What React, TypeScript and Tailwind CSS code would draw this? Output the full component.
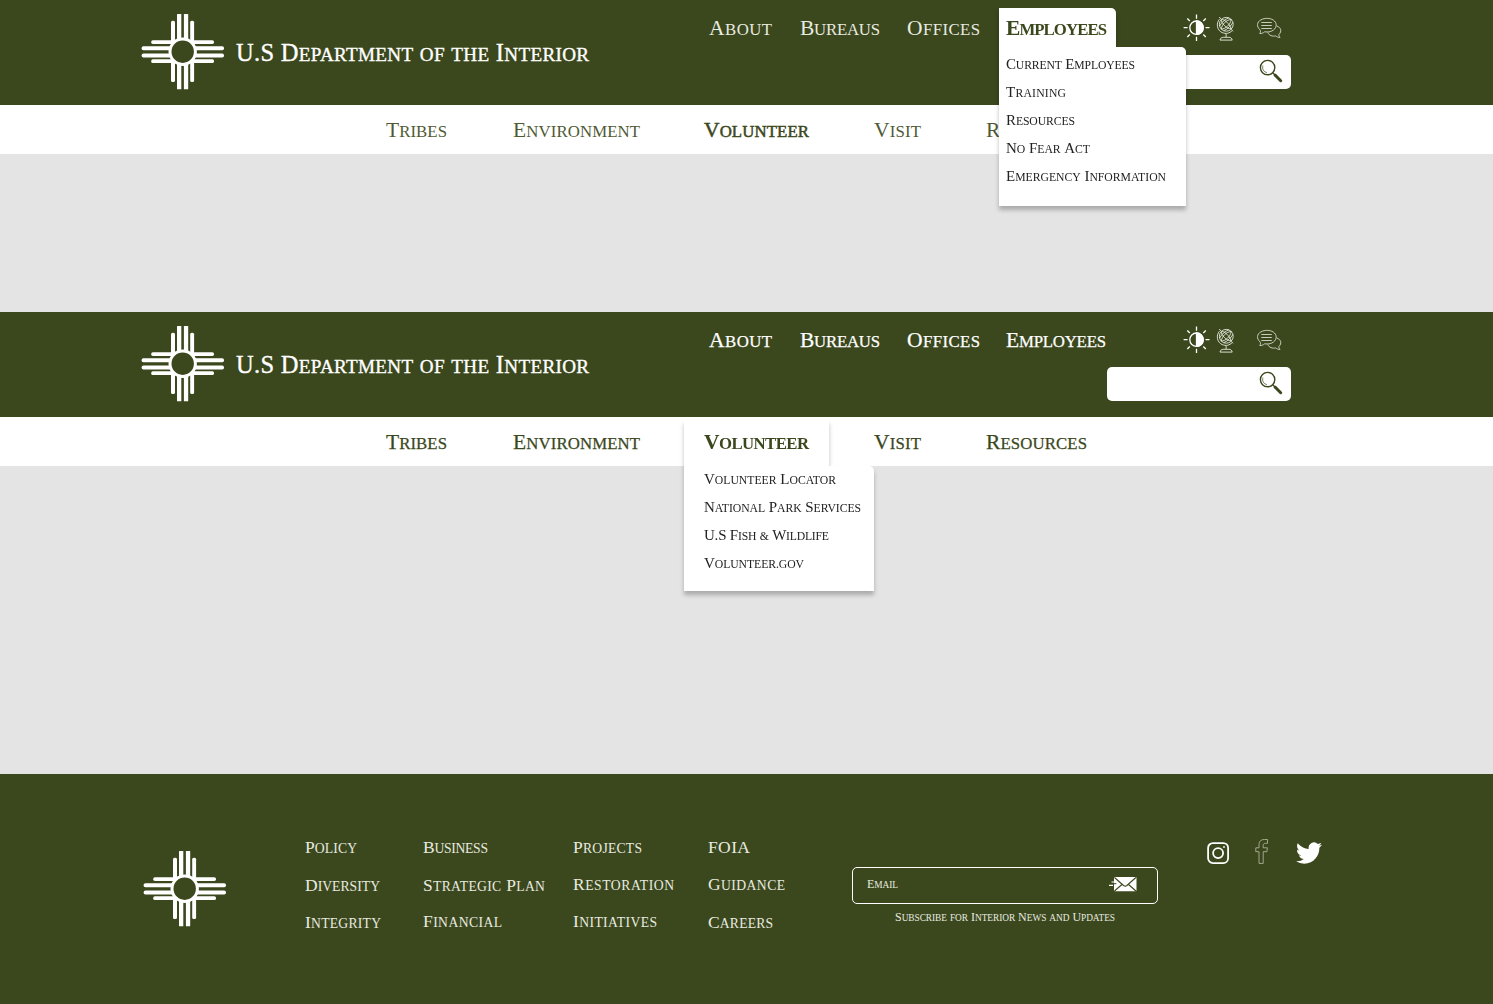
import { useLayoutEffect, useRef, useState } from "react";
import clsx from "clsx";

type LabelProps = { text: string; width: number; className?: string };

// A line of small caps, letter-spaced so that it fills the given width.
function Label({ text, width, className }: LabelProps) {
  const ref = useRef<HTMLSpanElement>(null);
  const [spacing, setSpacing] = useState(0);
  useLayoutEffect(() => {
    if (!ref.current) return;
    const natural = ref.current.getBoundingClientRect().width;
    setSpacing((width - natural) / (text.length - 1));
  }, [text, width]);
  return (
    <span className={clsx("block h-6 shrink-0 whitespace-pre leading-6", className)} style={{ width }}>
      <span ref={ref} className="inline-block" style={{ letterSpacing: `${spacing}px` }}>
        {text.split(/( )/).map((word, i) => {
          if (word === " " || (word === word.toUpperCase() && word !== "&")) return word;
          const capital = word[0] !== word[0].toLowerCase();
          return (
            <span
              key={i}
              className={clsx(
                "inline-block text-[0.78em] uppercase leading-none",
                capital && "first-letter:text-[1.282em]",
              )}
            >
              {word}
            </span>
          );
        })}
      </span>
    </span>
  );
}

function Zia({ className }: { className?: string }) {
  return (
    <svg viewBox="141 14 83 76" className={clsx("h-[76px] w-[83px] shrink-0", className)} fill="#fff">
      <rect x="171" y="20.7" width="4" height="61.3" rx="1.5" />
      <rect x="177" y="14" width="4.3" height="75.3" rx=".5" />
      <rect x="183.9" y="14" width="4.3" height="75.3" rx=".5" />
      <rect x="190.2" y="20.7" width="3.9" height="61.3" rx="1.5" />
      <rect x="151.2" y="40.2" width="62.8" height="3.8" rx="1.7" />
      <rect x="141.6" y="46.2" width="82.4" height="4" rx="1.8" />
      <rect x="141.6" y="53.6" width="82.4" height="4" rx="1.8" />
      <rect x="151.2" y="59.3" width="62.8" height="3.8" rx="1.7" />
      <circle cx="182.7" cy="51.7" r="12.7" fill="#3b471c" stroke="#fff" strokeWidth="3" />
    </svg>
  );
}

function Sun() {
  return (
    <svg viewBox="0 0 27 27" className="h-[27px] w-[27px] shrink-0" fill="none" stroke="#fff" strokeWidth="1.3">
      <circle cx="13.5" cy="13.7" r="6.7" />
      <path d="M13.5 7a6.7 6.7 0 0 1 0 13.4z" fill="#fff" />
      <path d="M13.5 .5v4.2M13.5 22.7v4.2M.6 13.7h4M22.5 13.7h4M4.3 4.5l2.5 2.5M20.3 20.5l2.5 2.5M4.3 23l2.5-2.5M20.3 7l2.5-2.5" />
    </svg>
  );
}

function Globe() {
  return (
    <svg viewBox="0 -0.3 20 25" className="h-[25px] w-5 shrink-0" fill="none" stroke="#e8ebe0" strokeWidth=".9">
      <circle cx="10.3" cy="8" r="6.9" />
      <path d="M3.2.7l2 2.2M15.3 13l1.7 2" />
      <path d="M3.5 2.8C-.4 7.5 1.3 14 6 16.2c4 1.8 7.6.7 10.2-1.8" />
      <path d="M5.5 3.2c3.2-.3 7.8 4.2 9.8 9.4M5.5 3.2c-.6 3.4 4.6 9 9.8 9.4M5.2 12.8C6 8 10 3.7 15.2 3.1M3.6 9.7C6 5.5 9 3 12.8 1.5M7.7 14.4c3.7-1.4 7.5-5 9.2-8.2M5.2 12.8c4.3-.2 9.2-4.3 10-9.7" />
      <path d="M10.1 17.2v3.7M4 23.8c.4-2 1.6-2.8 3.2-2.8h5.6c2 0 3 .8 3.4 2.8z" />
    </svg>
  );
}

function Chat() {
  return (
    <svg viewBox="0 -0.5 25 23" className="h-[23px] w-[25px] shrink-0" fill="none" stroke="#d5dacb" strokeWidth=".9" strokeLinejoin="round">
      <path d="M3.3 12.7C-.8 9-.2 4.5 4 2.3c3.7-2 8.9-1.9 12.2.2 3.9 2.4 4 7.3.2 10.1-2.6 1.8-5.6 2.2-8.7 1.7-1.6 1.3-3 1.8-4.9 1.7.7-1.2.9-2 .5-3.3z" />
      <path d="M4.3 5h10.5M4.3 8h10.5M4.3 11h10.5" />
      <path d="M19.7 8.5c4.5 1.3 5.3 5.7 2.3 8.3-.3 1.2.1 2.2 1 3.1-1.7.2-3-.4-4.2-1.5-3.3.7-6.8-.3-8-3.5" />
    </svg>
  );
}

function Magnifier() {
  return (
    <svg viewBox="0 0 24 24" className="h-6 w-6 shrink-0" fill="none" stroke="#3b471c">
      <circle cx="8.6" cy="8.6" r="7.2" strokeWidth="1.4" />
      <path d="M3.9 6.5c-1 3.5.8 6.6 4 7" strokeWidth=".7" />
      <path d="M13.6 13.6l3 3" strokeWidth="1.3" />
      <path d="M16 16l5.7 5.7" strokeWidth="3" strokeLinecap="round" />
    </svg>
  );
}

function Mail() {
  return (
    <svg viewBox="0 0 29 16" className="h-4 w-[29px] shrink-0">
      <rect x="6" y=".9" width="22.5" height="14.4" rx="1" fill="#fff" />
      <path d="M6.5 1.5l9 8q1.7 1.3 3.4 0l9-8M6.5 15l8-7M27.9 15L20 8" fill="none" stroke="#3b471c" strokeWidth="1.1" />
      <path d="M3.5 6h4M1 9.3h4M6 11.5h2" stroke="#fff" strokeWidth="1.2" />
      <path d="M5.3 7.7h3" stroke="#3b471c" strokeWidth="1" />
    </svg>
  );
}

function Instagram() {
  return (
    <svg viewBox="0 0 22 22" className="h-[22px] w-[22px] shrink-0" fill="none" stroke="#fff" strokeWidth="1.8">
      <rect x="1.1" y="1.1" width="20" height="20" rx="4.8" />
      <circle cx="11.1" cy="11.1" r="5" />
      <circle cx="17" cy="5" r=".9" fill="#fff" stroke="none" />
    </svg>
  );
}

function Facebook() {
  return (
    <svg viewBox="0 0 13 25" className="h-[25px] w-[13px] shrink-0" fill="none" stroke="#b9c0aa" strokeWidth=".8">
      <path d="M4 24.4V12.7H.8V8.8H4V5.6C4 2 6.2.5 9.4.5h3.1v3.8h-2.1c-1.5 0-2.2.7-2.2 2.2v2.3h4.2l-.5 3.900H8.200v11.700z" />
    </svg>
  );
}

function Twitter() {
  return (
    <svg viewBox="0 2 24 20" className="h-[22px] w-[26px] shrink-0" fill="#fff" preserveAspectRatio="none">
      <path d="M23.953 4.57a10 10 0 0 1-2.825.775 4.958 4.958 0 0 0 2.163-2.723c-.951.555-2.005.959-3.127 1.184a4.92 4.92 0 0 0-8.384 4.482C7.69 8.095 4.067 6.13 1.64 3.162a4.822 4.822 0 0 0-.666 2.475c0 1.71.87 3.213 2.188 4.096a4.904 4.904 0 0 1-2.228-.616v.06a4.923 4.923 0 0 0 3.946 4.827 4.996 4.996 0 0 1-2.212.085 4.936 4.936 0 0 0 4.604 3.417 9.867 9.867 0 0 1-6.102 2.105c-.39 0-.779-.023-1.17-.067a13.995 13.995 0 0 0 7.557 2.209c9.053 0 13.998-7.496 13.998-13.985 0-.21 0-.42-.015-.63A9.935 9.935 0 0 0 24 4.59z" />
    </svg>
  );
}

const employeeLinks = [
  { text: "Current Employees", width: 129 },
  { text: "Training", width: 60 },
  { text: "Resources", width: 69 },
  { text: "No Fear Act", width: 84 },
  { text: "Emergency Information", width: 160 },
];

const volunteerLinks = [
  { text: "Volunteer Locator", width: 132 },
  { text: "National Park Services", width: 157 },
  { text: "U.S Fish & Wildlife", width: 125 },
  { text: "Volunteer.gov", width: 100 },
];

function EmployeesMenu() {
  return (
    <div className="absolute left-[999px] top-2 z-10 drop-shadow-[0_4px_2px_rgba(0,0,0,0.25)]">
      <div className="h-[39px] w-[117px] rounded-tr-[5px] bg-white pl-[7px] pt-2">
        <Label text="Employees" width={101} className="text-[21.5px] font-bold text-[#3b471c]" />
      </div>
      <div className="flex h-[159px] w-[187px] flex-col gap-1 rounded-tr-[5px] bg-white pl-[7px] pt-[5px] text-[15px] text-[#222]">
        {employeeLinks.map((l) => (
          <Label key={l.text} {...l} />
        ))}
      </div>
    </div>
  );
}

function VolunteerMenu() {
  return (
    <div className="absolute left-[684px] top-[108px] z-10 drop-shadow-[0_4px_2px_rgba(0,0,0,0.25)]">
      <div className="h-[46px] w-[145px] bg-white pl-5 pt-[10px]">
        <Label text="Volunteer" width={105} className="text-[21.5px] font-bold text-[#3b471c]" />
      </div>
      <div className="flex h-[125px] w-[190px] flex-col gap-1 rounded-tr-[5px] bg-white pl-5 pt-px text-[15px] text-[#222]">
        {volunteerLinks.map((l) => (
          <Label key={l.text} {...l} />
        ))}
      </div>
    </div>
  );
}

function Header({ open }: { open: "employees" | "volunteer" }) {
  const medium = open === "volunteer";
  return (
    <header className="relative">
      <div className="flex h-[105px] bg-[#3b471c] pl-[141px] text-white">
        <Zia className="mt-[14px]" />
        <Label
          text="U.S Department of the Interior"
          width={353}
          className="ml-3 mt-[41px] text-[24.5px] [-webkit-text-stroke:0.35px]"
        />
        <div className="ml-[120px] flex w-[582px] flex-col">
          <div className="flex h-[55px]">
            <nav
              className={clsx(
                "flex pt-4 text-[21.5px]",
                medium ? "[-webkit-text-stroke:0.25px]" : "text-[#e8ebe0]",
              )}
            >
              <Label text="About" width={63} />
              <Label text="Bureaus" width={80} className="ml-7" />
              <Label text="Offices" width={73} className="ml-[27px]" />
              <Label text="Employees" width={100} className="ml-[26px]" />
            </nav>
            <div className="ml-[77px] flex pt-[14px]">
              <Sun />
              <div className="ml-[6px] mt-[2px]"><Globe /></div>
              <div className="ml-[21px] mt-[3px]"><Chat /></div>
            </div>
          </div>
          <div className="ml-auto flex h-[34px] w-[184px] justify-end rounded-[5px] bg-white pr-2 pt-1">
            <Magnifier />
          </div>
        </div>
      </div>
      <nav
        className={clsx(
          "flex h-[49px] bg-white pl-[386px] pt-[13px] text-[21.5px]",
          medium ? "text-[#3b471c] [-webkit-text-stroke:0.25px]" : "text-[#4f5a34]",
        )}
      >
        <Label text="Tribes" width={61} />
        <Label text="Environment" width={127} className="ml-[66px]" />
        <Label text="Volunteer" width={105} className="ml-16 text-[#3b471c] [-webkit-text-stroke:0.5px]" />
        <Label text="Visit" width={47} className="ml-[65px]" />
        <Label text="Resources" width={101} className="ml-[65px]" />
      </nav>
      {open === "employees" ? <EmployeesMenu /> : <VolunteerMenu />}
    </header>
  );
}

type FooterLink = { text: string; width: number; gap: string };

const footerColumns: { size: string; links: FooterLink[] }[] = [
  {
    size: "w-[118px]",
    links: [
      { text: "Policy", width: 52, gap: "mt-0" },
      { text: "Diversity", width: 75, gap: "mt-[14px]" },
      { text: "Integrity", width: 76, gap: "mt-[13px]" },
    ],
  },
  {
    size: "w-[150px]",
    links: [
      { text: "Business", width: 65, gap: "mt-0" },
      { text: "Strategic Plan", width: 122, gap: "mt-[14px]" },
      { text: "Financial", width: 79, gap: "mt-3" },
    ],
  },
  {
    size: "w-[135px]",
    links: [
      { text: "Projects", width: 69, gap: "mt-0" },
      { text: "Restoration", width: 101, gap: "mt-[13px]" },
      { text: "Initiatives", width: 84, gap: "mt-[13px]" },
    ],
  },
  {
    size: "w-[144px]",
    links: [
      { text: "FOIA", width: 42, gap: "mt-0" },
      { text: "Guidance", width: 77, gap: "mt-[13px]" },
      { text: "Careers", width: 65, gap: "mt-[14px]" },
    ],
  },
];

function Footer() {
  return (
    <footer className="flex h-[230px] bg-[#3b471c] pl-[143px] text-[#e8ebe0]">
      <Zia className="mt-[77px]" />
      <div className="ml-[79px] flex pt-[61px] text-[17.5px]">
        {footerColumns.map((c) => (
          <div key={c.links[0].text} className={c.size}>
            {c.links.map((l) => (
              <Label key={l.text} text={l.text} width={l.width} className={l.gap} />
            ))}
          </div>
        ))}
      </div>
      <div className="w-[306px] shrink-0 pt-[93px] text-[12px]">
        <div className="flex h-[37px] items-start justify-between rounded-[5px] border border-white pl-[14px] pr-5">
          <Label text="Email" width={31} className="mt-1" />
          <div className="mt-2"><Mail /></div>
        </div>
        <Label text="Subscribe for Interior News and Updates" width={220} className="ml-[43px] mt-px" />
      </div>
      <div className="ml-[49px] flex pt-[65px]">
        <div className="mt-[3px]"><Instagram /></div>
        <div className="ml-[26px]"><Facebook /></div>
        <div className="ml-7 mt-[3px]"><Twitter /></div>
      </div>
    </footer>
  );
}

export default function App() {
  return (
    <div className="flex h-[1004px] w-[1493px] flex-col overflow-hidden bg-[#e4e4e4] font-['Liberation_Serif',serif]">
      <div className="h-[312px]">
        <Header open="employees" />
      </div>
      <div className="h-[462px]">
        <Header open="volunteer" />
      </div>
      <Footer />
    </div>
  );
}
